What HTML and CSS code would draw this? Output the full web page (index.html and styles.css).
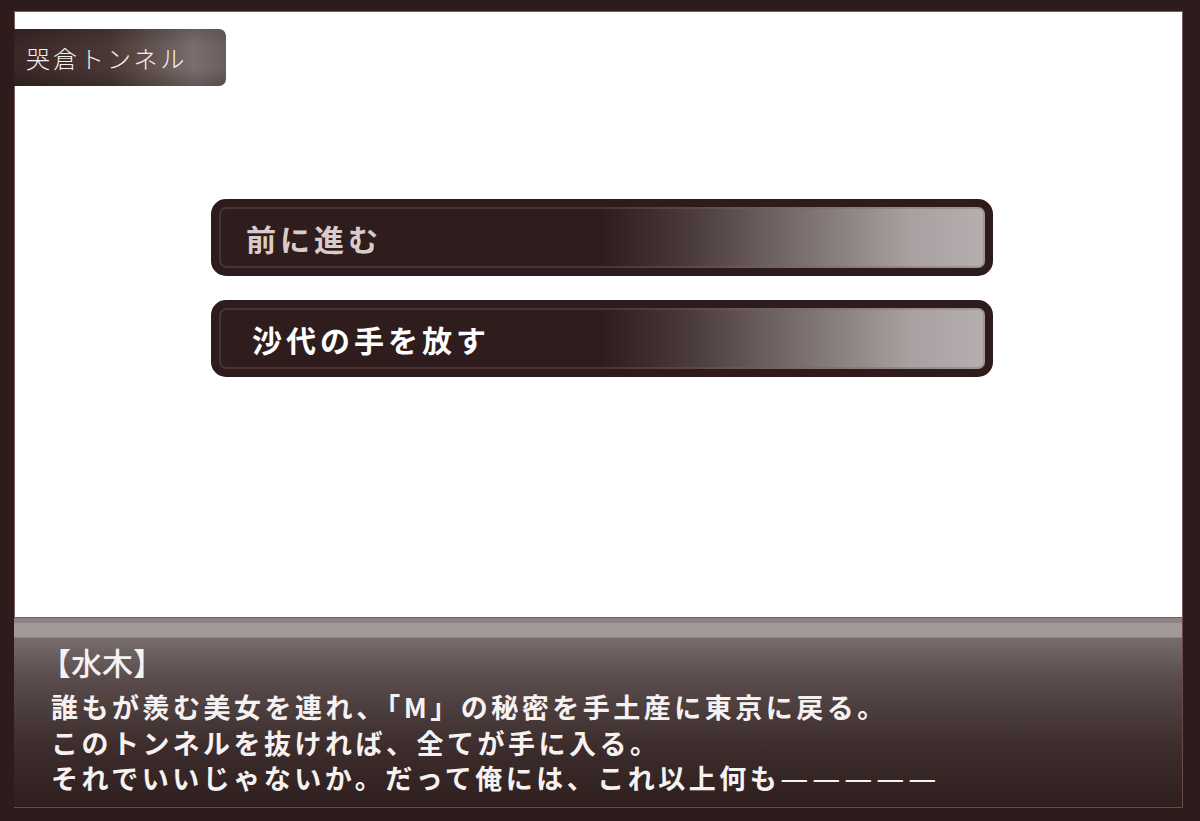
FILE: index.html
```html
<!DOCTYPE html>
<html lang="ja">
<head>
  <meta charset="UTF-8" />
  <meta name="viewport" content="width=device-width, initial-scale=1" />
  <title>哭倉トンネル</title>
  <link rel="stylesheet" href="styles.css">
</head>
<body>
  <div class="screen">
    <div class="stage">
      <div class="location">哭倉トンネル</div>
      <div class="choices">
        <div class="choice choice-muted"><span>前に進む</span></div>
        <div class="choice choice-active"><span>沙代の手を放す</span></div>
      </div>
    </div>
    <div class="dialog">
      <div class="speaker">【水木】</div>
      <div class="lines">
        <p>誰もが羨む美女を連れ、「M」の秘密を手土産に東京に戻る。</p>
        <p>このトンネルを抜ければ、全てが手に入る。</p>
        <p>それでいいじゃないか。だって俺には、これ以上何も<span class="dash">—</span><span class="dash">—</span><span class="dash">—</span><span class="dash">—</span><span class="dash">—</span></p>
      </div>
    </div>
  </div>
</body>
</html>
```

FILE: styles.css
```css
/* Game screen frame */
body {
  margin: 0;
  background: #2e1c1c;
  font-family: "Noto Sans CJK JP", "Noto Sans", sans-serif;
}
.screen {
  width: 1200px;
  height: 821px;
  box-sizing: border-box;
  padding: 11px 17px 13px 14px;
  display: flex;
  flex-direction: column;
}
/* White scene area */
.stage {
  flex: 1;
  background: #fff;
  padding-top: 18px;
  box-shadow: inset 0 0 0 1px #7a5a5a;
}
.location {
  width: 212px;
  height: 57px;
  box-sizing: border-box;
  padding-left: 12px;
  display: flex;
  align-items: center;
  border-radius: 0 7px 7px 0;
  background:
    linear-gradient(180deg, rgba(0, 0, 0, 0.15) 0%, rgba(0, 0, 0, 0) 30%, rgba(0, 0, 0, 0) 70%, rgba(0, 0, 0, 0.2) 100%),
    linear-gradient(90deg, #3a2626 0%, #4a3836 45%, #7a6e6c 85%, #6a5e5c 100%);
  color: #f4f0ef;
  font-size: 24px;
  font-weight: 300;
  letter-spacing: 3px;
}
/* Choice buttons */
.choices {
  margin-top: 113px;
  margin-left: 197px;
  width: 782px;
  display: flex;
  flex-direction: column;
  gap: 24px;
}
.choice {
  height: 77px;
  box-sizing: border-box;
  border: 8px solid #2e1c1c;
  border-radius: 15px;
  background: linear-gradient(90deg, #2f1d1e 0%, #2f1d1e 50%, #463636 60%, #7a6e6e 76%, #a8a0a0 90%, #b6afaf 100%);
  box-shadow: inset 0 0 0 2px rgba(120, 96, 96, 0.35);
  display: flex;
  align-items: center;
  font-size: 30px;
  font-weight: 700;
  letter-spacing: 4px;
}
.choice-muted {
  padding-left: 27px;
  color: #d9cbcb;
}
.choice-active {
  padding-left: 33px;
  color: #fff;
}
/* Message window */
.dialog {
  height: 190px;
  box-sizing: border-box;
  padding: 24px 0 0 35px;
  border-bottom: 1px solid #6a4a48;
  border-right: 1px solid #6a4a48;
  background:
    linear-gradient(180deg, #8c8282 0px, #8c8282 5px, #a29999 5px, #a29999 19px, #786c6c 20px, #5a4c4c 60px, #3c2c2c 130px, #2e1e1e 190px);
  color: #f6f2f2;
}
.speaker {
  font-size: 31px;
  font-weight: 500;
  line-height: 40px;
  margin-left: -9px;
}
.lines {
  margin-top: 7px;
  padding-left: 2px;
}
.lines p {
  margin: 0;
  font-size: 27px;
  font-weight: 700;
  line-height: 35.5px;
  letter-spacing: 3.5px;
}
/* Long pause dashes, one stroke each */
.dash {
  display: inline-block;
  margin-right: 4px;
  letter-spacing: 0;
  font-family: "DejaVu Sans", sans-serif;
  font-weight: 400;
  font-size: 28px;
}
```
